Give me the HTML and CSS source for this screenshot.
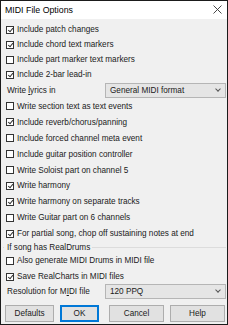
FILE: index.html
```html
<!DOCTYPE html>
<html lang="en">
<head>
  <meta charset="UTF-8" />
  <title>MIDI File Options</title>
  <link rel="stylesheet" href="styles.css">
</head>
<body>
  <div class="dialog">
    <div class="titlebar">
      <span class="title">MIDI File Options</span>
      <svg class="close" width="9" height="9" viewBox="0 0 9 9">
        <path d="M0.5 0.5 L8.5 8.5 M8.5 0.5 L0.5 8.5" stroke="#333" stroke-width="0.9" fill="none"/>
      </svg>
    </div>

    <div class="content">
      <div class="top-rows">
        <label class="check on"><span class="box"></span>Include patch changes</label>
        <label class="check on"><span class="box"></span>Include chord text markers</label>
        <label class="check"><span class="box"></span>Include part marker text markers</label>
        <label class="check on"><span class="box"></span>Include 2-bar lead-in</label>
      </div>

      <div class="select-row lyrics">
        <span class="select-label">Write <u>l</u>yrics in</span>
        <div class="combo">General MIDI format<span class="chev"></span></div>
      </div>

      <div class="mid-rows">
        <label class="check"><span class="box"></span>Write section text as text events</label>
        <label class="check on"><span class="box"></span>Include reverb/chorus/panning</label>
        <label class="check"><span class="box"></span>Include forced channel meta event</label>
        <label class="check"><span class="box"></span>Include guitar position controller</label>
        <label class="check"><span class="box"></span>Write Soloist part on channel 5</label>
        <label class="check on"><span class="box"></span>Write harmony</label>
        <label class="check on"><span class="box"></span>Write harmony on separate tracks</label>
        <label class="check"><span class="box"></span>Write Guitar part on 6 channels</label>
        <label class="check on"><span class="box"></span>For partial song, chop off sustaining notes at end</label>
      </div>

      <div class="group">
        <div class="group-title"><span>If song has RealDrums</span></div>
        <label class="check"><span class="box"></span>Also generate MIDI Drums in MIDI file</label>
        <label class="check on"><span class="box"></span>Save RealCharts in MIDI files</label>
      </div>

      <div class="select-row resolution">
        <span class="select-label">Resolution for M<u>I</u>DI file</span>
        <div class="combo">120 PPQ<span class="chev"></span></div>
      </div>
    </div>

    <div class="buttons">
      <button class="btn defaults">Defaults</button>
      <button class="btn ok">OK</button>
      <button class="btn cancel">Cancel</button>
      <button class="btn help">Help</button>
    </div>
  </div>
</body>
</html>
```

FILE: styles.css
```css
* {
  margin: 0;
  padding: 0;
  box-sizing: border-box;
}

body {
  width: 228px;
  height: 325px;
  font-family: 'Liberation Sans', Arial, sans-serif;
  font-size: 8.2px;
  color: #1a1a1a;
  background: #fff;
  overflow: hidden;
}

.dialog {
  width: 228px;
  height: 325px;
  border: 1px solid #1b1b1b;
  background-color: #f0f0f0;
  display: flex;
  flex-direction: column;
}

.titlebar {
  height: 18px;
  background-color: #fff;
  display: flex;
  align-items: center;
  justify-content: space-between;
  padding: 0 4px 1px 4px;
}

.title {
  font-size: 8.8px;
  color: #000;
}

.close {
  margin-right: 1px;
}

.content {
  padding: 3px 0 0 5px;
}

.check {
  display: flex;
  align-items: center;
  height: 15px;
  white-space: nowrap;
}

.mid-rows .check,
.group .check {
  height: 15.9px;
}

.box {
  width: 8px;
  height: 8px;
  border: 1px solid #333;
  background-color: #fff;
  margin-right: 3px;
  flex-shrink: 0;
  position: relative;
}

.check.on .box::after {
  content: "";
  position: absolute;
  left: 1.6px;
  top: 0px;
  width: 2.2px;
  height: 4.2px;
  border-right: 1px solid #333;
  border-bottom: 1px solid #333;
  transform: rotate(40deg);
}

.select-row {
  display: flex;
  align-items: center;
  height: 16.5px;
  padding-left: 1px;
}

.select-label {
  width: 98px;
}

.combo {
  width: 121px;
  height: 15px;
  background-color: #e5e5e5;
  border: 1px solid #b5b5b5;
  display: flex;
  align-items: center;
  justify-content: space-between;
  padding: 0 5px 0 4px;
}

.chev {
  width: 4px;
  height: 4px;
  border-right: 1px solid #555;
  border-bottom: 1px solid #555;
  transform: rotate(45deg);
  margin-top: -3px;
}

.group-title {
  height: 11.5px;
  display: flex;
  align-items: center;
  padding-left: 1px;
  margin-left: -3px;
  margin-right: 1px;
  position: relative;
}

.group-title::before {
  content: "";
  position: absolute;
  left: 0;
  right: 0;
  top: 5px;
  border-top: 1px solid #dcdcdc;
}

.group-title span {
  position: relative;
  background-color: #f0f0f0;
  padding: 0 2px 0 3px;
}

.resolution {
  height: 16px;
  margin-top: -1.5px;
}

.buttons {
  display: flex;
  padding: 6px 0 0 4px;
  gap: 6px;
}

.btn {
  height: 17px;
  font-family: inherit;
  font-size: 8.2px;
  color: #1a1a1a;
  background-color: #e1e1e1;
  border: 1px solid #adadad;
}

.defaults {
  width: 49px;
}

.ok {
  width: 39px;
  border: 2px solid #0078d7;
}

.cancel {
  width: 55px;
  margin-left: 4px;
}

.help {
  width: 55px;
}
```
